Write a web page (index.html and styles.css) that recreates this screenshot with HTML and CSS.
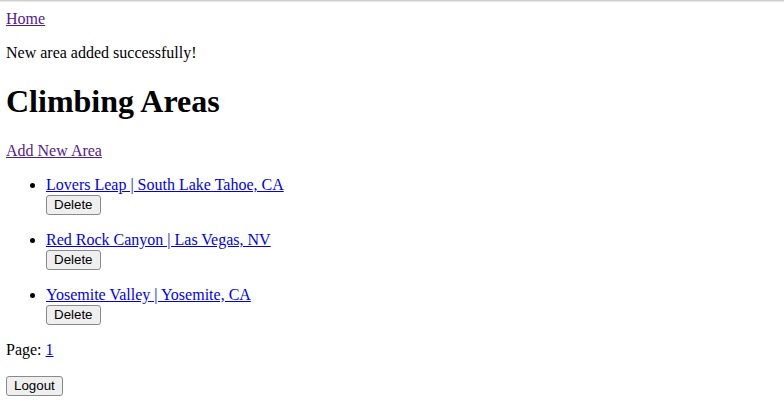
FILE: index.html
```html
<!DOCTYPE html>
<html>
<head>
<meta charset="utf-8">
<link rel="stylesheet" href="styles.css">
</head>
<body>
<div class="topline"></div>
<div class="page">
<a href="#" class="visited">Home</a>
<p>New area added successfully!</p>
<h1>Climbing Areas</h1>
<a href="#" class="visited">Add New Area</a>
<ul>
<li><a href="#">Lovers Leap | South Lake Tahoe, CA</a><form><button type="button" class="btn">Delete</button></form></li>
<li><a href="#">Red Rock Canyon | Las Vegas, NV</a><form><button type="button" class="btn">Delete</button></form></li>
<li><a href="#">Yosemite Valley | Yosemite, CA</a><form><button type="button" class="btn">Delete</button></form></li>
</ul>
<p>Page: <a href="#">1</a></p>
<form class="logout"><button type="button" class="btn">Logout</button></form>
</div>
</body>
</html>
```
FILE: styles.css
```css
html, body {
  margin: 0;
  padding: 0;
  background: #fff;
}
body {
  font-family: "Liberation Serif", "Times New Roman", serif;
  font-size: 16px;
  color: #000;
}
.topline {
  height: 1px;
  background: #d0d0d0;
  border-bottom: 1px solid #e8e8e8;
}
.page {
  padding: 8px 8px 8px 6px;
}
a {
  color: #0000ee;
}
a.visited {
  color: #551a8b;
}
p {
  margin: 16px 0;
}
h1 {
  font-size: 32px;
  margin: 21px 0 22px;
}
ul {
  margin: 16px 0;
  padding-left: 40px;
}
li {
  margin-bottom: 16px;
}
form {
  margin: 0;
}
.btn {
  display: block;
  box-sizing: border-box;
  height: 20px;
  font-family: "Liberation Sans", Arial, sans-serif;
  font-size: 13.33px;
  line-height: 16px;
  color: #000;
  background: #efefef;
  border: 1px solid #8a8a8a;
  border-radius: 3px;
  padding: 0 7px;
  margin: 1px 0 0;
}
.logout {
  padding-top: 1px;
}
.logout .btn {
  margin-top: 0;
}
```
